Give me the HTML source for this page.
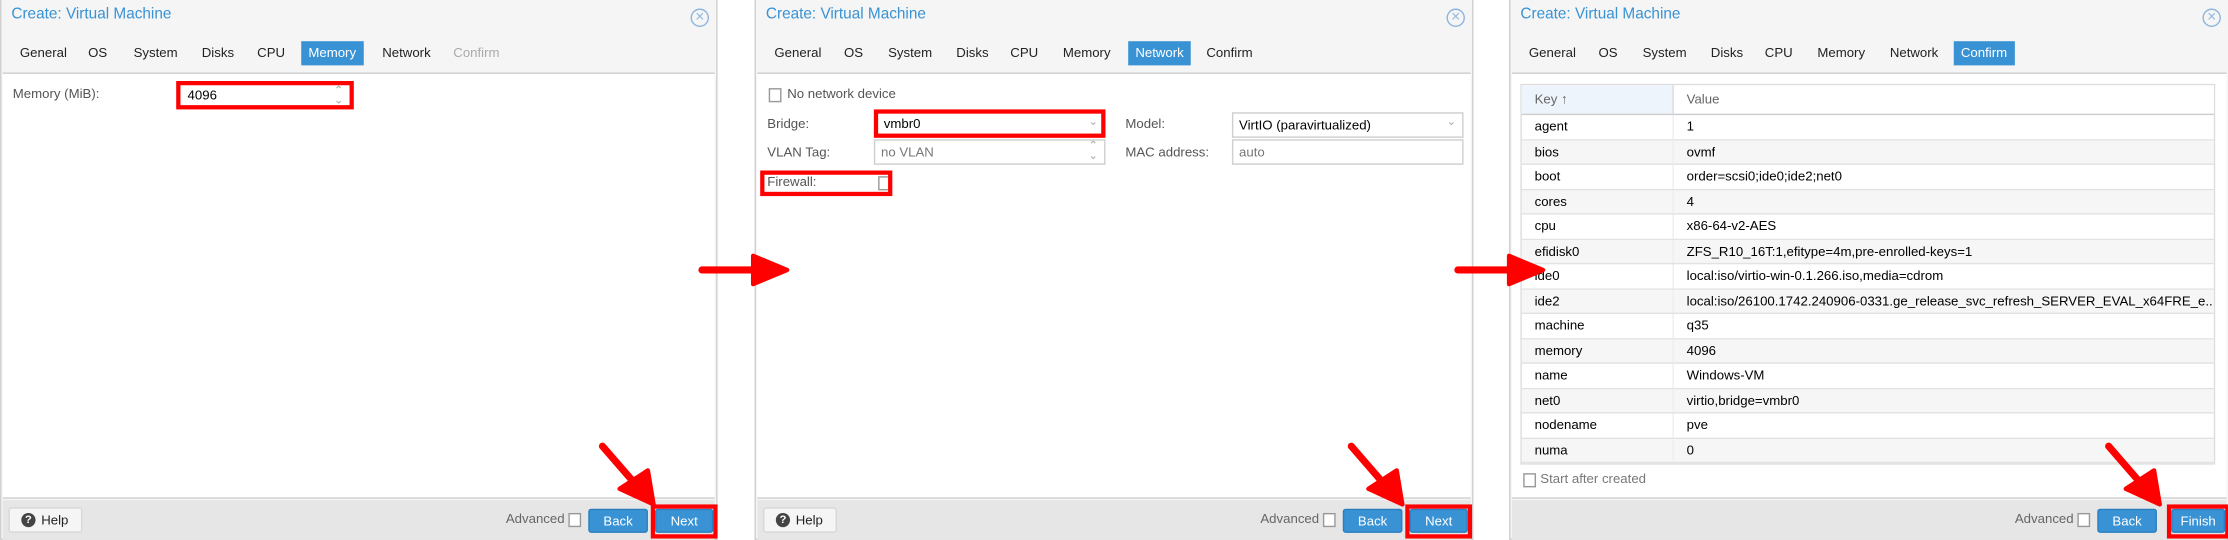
<!DOCTYPE html>
<html><head><meta charset="utf-8"><style>
*{box-sizing:border-box;margin:0;padding:0}
html,body{width:2228px;height:540px;overflow:hidden;background:#fff}
#s{position:absolute;left:0;top:0;width:1568px;height:380px;transform:scale(1.42092);transform-origin:0 0;font-family:"Liberation Sans",sans-serif;font-size:9.3px;color:#000}
.p{position:absolute;top:0;height:380px;width:505px;background:#f5f5f5;border:1px solid #d0d0d0;border-top:none}
.t{position:absolute;left:7px;top:4px;color:#3892d4;font-size:10.8px}
.x{position:absolute;right:5px;top:6px;width:13px;height:13px;border:1px solid #8fb6de;border-radius:50%;color:#8fb6de;font-size:11px;line-height:11px;text-align:center}
.tab{position:absolute;top:29px;height:17px;line-height:17px;padding:0 5px;color:#222}
.tab.a{background:#3892d4;color:#fff}
.tab.d{color:#aaa}
.c{position:absolute;left:1px;right:1px;top:51px;height:300px;background:#fff;border-top:1px solid #cfcfcf;border-bottom:1px solid #cfcfcf}
.f{position:absolute;left:1px;right:1px;top:352px;height:28px;background:#e6e6e6}
.btn{position:absolute;top:6px;height:17px;line-height:17px;text-align:center;color:#fff;background:#3892d4;border:1px solid #2a7fc0;border-radius:2px}
.help{position:absolute;left:4px;top:5px;width:52px;height:18px;background:#f5f5f5;border:1px solid #d8d8d8;border-radius:2px;line-height:16px;color:#222;padding-left:22px}
.help:before{content:"?";position:absolute;left:8px;top:3px;width:10px;height:10px;border-radius:50%;background:#444;color:#fff;font-size:8px;line-height:10px;text-align:center;font-weight:bold;padding:0}
.adv{position:absolute;top:8px;color:#666}
.cb{position:absolute;width:9px;height:10px;border:1px solid #999;background:#fff}
.red{position:absolute;border:3px solid #f00}
.lbl{position:absolute;color:#555}
.in{position:absolute;height:18px;border:1px solid #cfcfcf;background:#fff;line-height:16px;padding-left:4px}
.arr{position:absolute;color:#aaa;font-size:8px}
.g{position:absolute;left:6px;top:7px;width:489px;border:1px solid #ddd}
.r{display:flex;height:17.5px;border-bottom:1px solid #e2e2e2;line-height:16.5px;white-space:nowrap;overflow:hidden}
.r:nth-child(odd){background:#f6f6f6}
.r div{padding-left:9px;overflow:hidden}
.r div:first-child{width:107px;flex:none;border-right:1px solid #eee}
.r.h{height:21px;line-height:20px;color:#666;background:#fff;border-bottom:1px solid #ccc}
.r.h div:first-child{background:#eef4fb;border-right:1px solid #d8dde3}
</style></head><body><div id="s">

<!-- panel 1 -->
<div class="p" style="left:0;width:505px">
<div class="t">Create: Virtual Machine</div><div class="x">×</div>
<div class="tab" style="left:8px">General</div><div class="tab" style="left:56px">OS</div><div class="tab" style="left:88px">System</div><div class="tab" style="left:136px">Disks</div><div class="tab" style="left:175px">CPU</div><div class="tab a" style="left:211px">Memory</div><div class="tab" style="left:263px">Network</div><div class="tab d" style="left:313px">Confirm</div>
<div class="c">
<div class="lbl" style="left:7px;top:9px">Memory (MiB):</div>
<div class="in" style="left:126px;top:7px;width:118px;border:none">4096</div><div class="arr" style="left:233px;top:8px;line-height:7px">⌃<br>⌄</div>
<div class="red" style="left:122px;top:5px;width:125px;height:20px"></div>
</div>
<div class="f"><div class="help">Help</div><div class="adv" style="left:354px">Advanced</div><div class="cb" style="left:398px;top:9px"></div>
<div class="btn" style="left:412px;width:42px">Back</div><div class="btn" style="left:459px;width:41px">Next</div>
<div class="red" style="left:456px;top:3px;width:47px;height:24px"></div></div>
</div>

<!-- panel 2 -->
<div class="p" style="left:531px;width:506px">
<div class="t">Create: Virtual Machine</div><div class="x">×</div>
<div class="tab" style="left:8px">General</div><div class="tab" style="left:57px">OS</div><div class="tab" style="left:88px">System</div><div class="tab" style="left:136px">Disks</div><div class="tab" style="left:174px">CPU</div><div class="tab" style="left:211px">Memory</div><div class="tab a" style="left:262px">Network</div><div class="tab" style="left:312px">Confirm</div>
<div class="c">
<div class="cb" style="left:8px;top:10px"></div><div class="lbl" style="left:21px;top:9px">No network device</div>
<div class="lbl" style="left:7px;top:30px">Bridge:</div>
<div class="in" style="left:85px;top:27px;width:159px;border:none">vmbr0</div><div class="arr" style="left:233px;top:29px">⌄</div>
<div class="red" style="left:82px;top:25px;width:163px;height:20px"></div>
<div class="lbl" style="left:259px;top:30px">Model:</div>
<div class="in" style="left:334px;top:27px;width:163px">VirtIO (paravirtualized)</div><div class="arr" style="left:485px;top:29px">⌄</div>
<div class="lbl" style="left:7px;top:50px">VLAN Tag:</div>
<div class="in" style="left:82px;top:46px;width:163px;color:#777">no VLAN</div><div class="arr" style="left:233px;top:47px;line-height:7px">⌃<br>⌄</div>
<div class="lbl" style="left:259px;top:50px">MAC address:</div>
<div class="in" style="left:334px;top:46px;width:163px;color:#777">auto</div>
<div class="lbl" style="left:7px;top:71px">Firewall:</div><div class="cb" style="left:85px;top:72px"></div>
<div class="red" style="left:2px;top:68px;width:93px;height:18px"></div>
</div>
<div class="f"><div class="help">Help</div><div class="adv" style="left:354px">Advanced</div><div class="cb" style="left:398px;top:9px"></div>
<div class="btn" style="left:412px;width:42px">Back</div><div class="btn" style="left:459px;width:41px">Next</div>
<div class="red" style="left:456px;top:3px;width:47px;height:24px"></div></div>
</div>

<!-- panel 3 -->
<div class="p" style="left:1062px;width:506px;border-right:none">
<div class="t">Create: Virtual Machine</div><div class="x">×</div>
<div class="tab" style="left:8px">General</div><div class="tab" style="left:57px">OS</div><div class="tab" style="left:88px">System</div><div class="tab" style="left:136px">Disks</div><div class="tab" style="left:174px">CPU</div><div class="tab" style="left:211px">Memory</div><div class="tab" style="left:262px">Network</div><div class="tab a" style="left:312px">Confirm</div>
<div class="c">
<div class="g">
<div class="r h"><div>Key ↑</div><div>Value</div></div>
<div class="r"><div>agent</div><div>1</div></div>
<div class="r"><div>bios</div><div>ovmf</div></div>
<div class="r"><div>boot</div><div>order=scsi0;ide0;ide2;net0</div></div>
<div class="r"><div>cores</div><div>4</div></div>
<div class="r"><div>cpu</div><div>x86-64-v2-AES</div></div>
<div class="r"><div>efidisk0</div><div>ZFS_R10_16T:1,efitype=4m,pre-enrolled-keys=1</div></div>
<div class="r"><div>ide0</div><div>local:iso/virtio-win-0.1.266.iso,media=cdrom</div></div>
<div class="r"><div>ide2</div><div>local:iso/26100.1742.240906-0331.ge_release_svc_refresh_SERVER_EVAL_x64FRE_e...</div></div>
<div class="r"><div>machine</div><div>q35</div></div>
<div class="r"><div>memory</div><div>4096</div></div>
<div class="r"><div>name</div><div>Windows-VM</div></div>
<div class="r"><div>net0</div><div>virtio,bridge=vmbr0</div></div>
<div class="r"><div>nodename</div><div>pve</div></div>
<div class="r"><div>numa</div><div>0</div></div>
</div>
<div class="cb" style="left:8px;top:281px"></div><div class="lbl" style="left:20px;top:280px;color:#777">Start after created</div>
</div>
<div class="f"><div class="adv" style="left:354px">Advanced</div><div class="cb" style="left:398px;top:9px"></div>
<div class="btn" style="left:412px;width:42px">Back</div><div class="btn" style="left:464px;width:38px">Finish</div>
<div class="red" style="left:461px;top:3px;width:44px;height:24px"></div></div>
</div>

<!-- arrows -->
<svg style="position:absolute;left:0;top:0" width="1568" height="380">
<g fill="#f00" stroke="#f00" stroke-linejoin="round" stroke-linecap="round">
<line x1="494" y1="190" x2="535" y2="190" stroke-width="5"/><polygon points="530,180 554,190 530,200" stroke-width="3"/>
<line x1="1026" y1="190" x2="1066" y2="190" stroke-width="5"/><polygon points="1062,180 1086,190 1062,200" stroke-width="3"/>
<line x1="424" y1="314" x2="450" y2="344" stroke-width="5"/><polygon points="436,344 460,355 456,331" stroke-width="3"/>
<line x1="1484" y1="314" x2="1510" y2="344" stroke-width="5"/><polygon points="1496,344 1520,355 1516,331" stroke-width="3"/>
<line x1="951" y1="314" x2="977" y2="344" stroke-width="5"/><polygon points="963,344 987,355 983,331" stroke-width="3"/>
</g></svg>
</div></body></html>
